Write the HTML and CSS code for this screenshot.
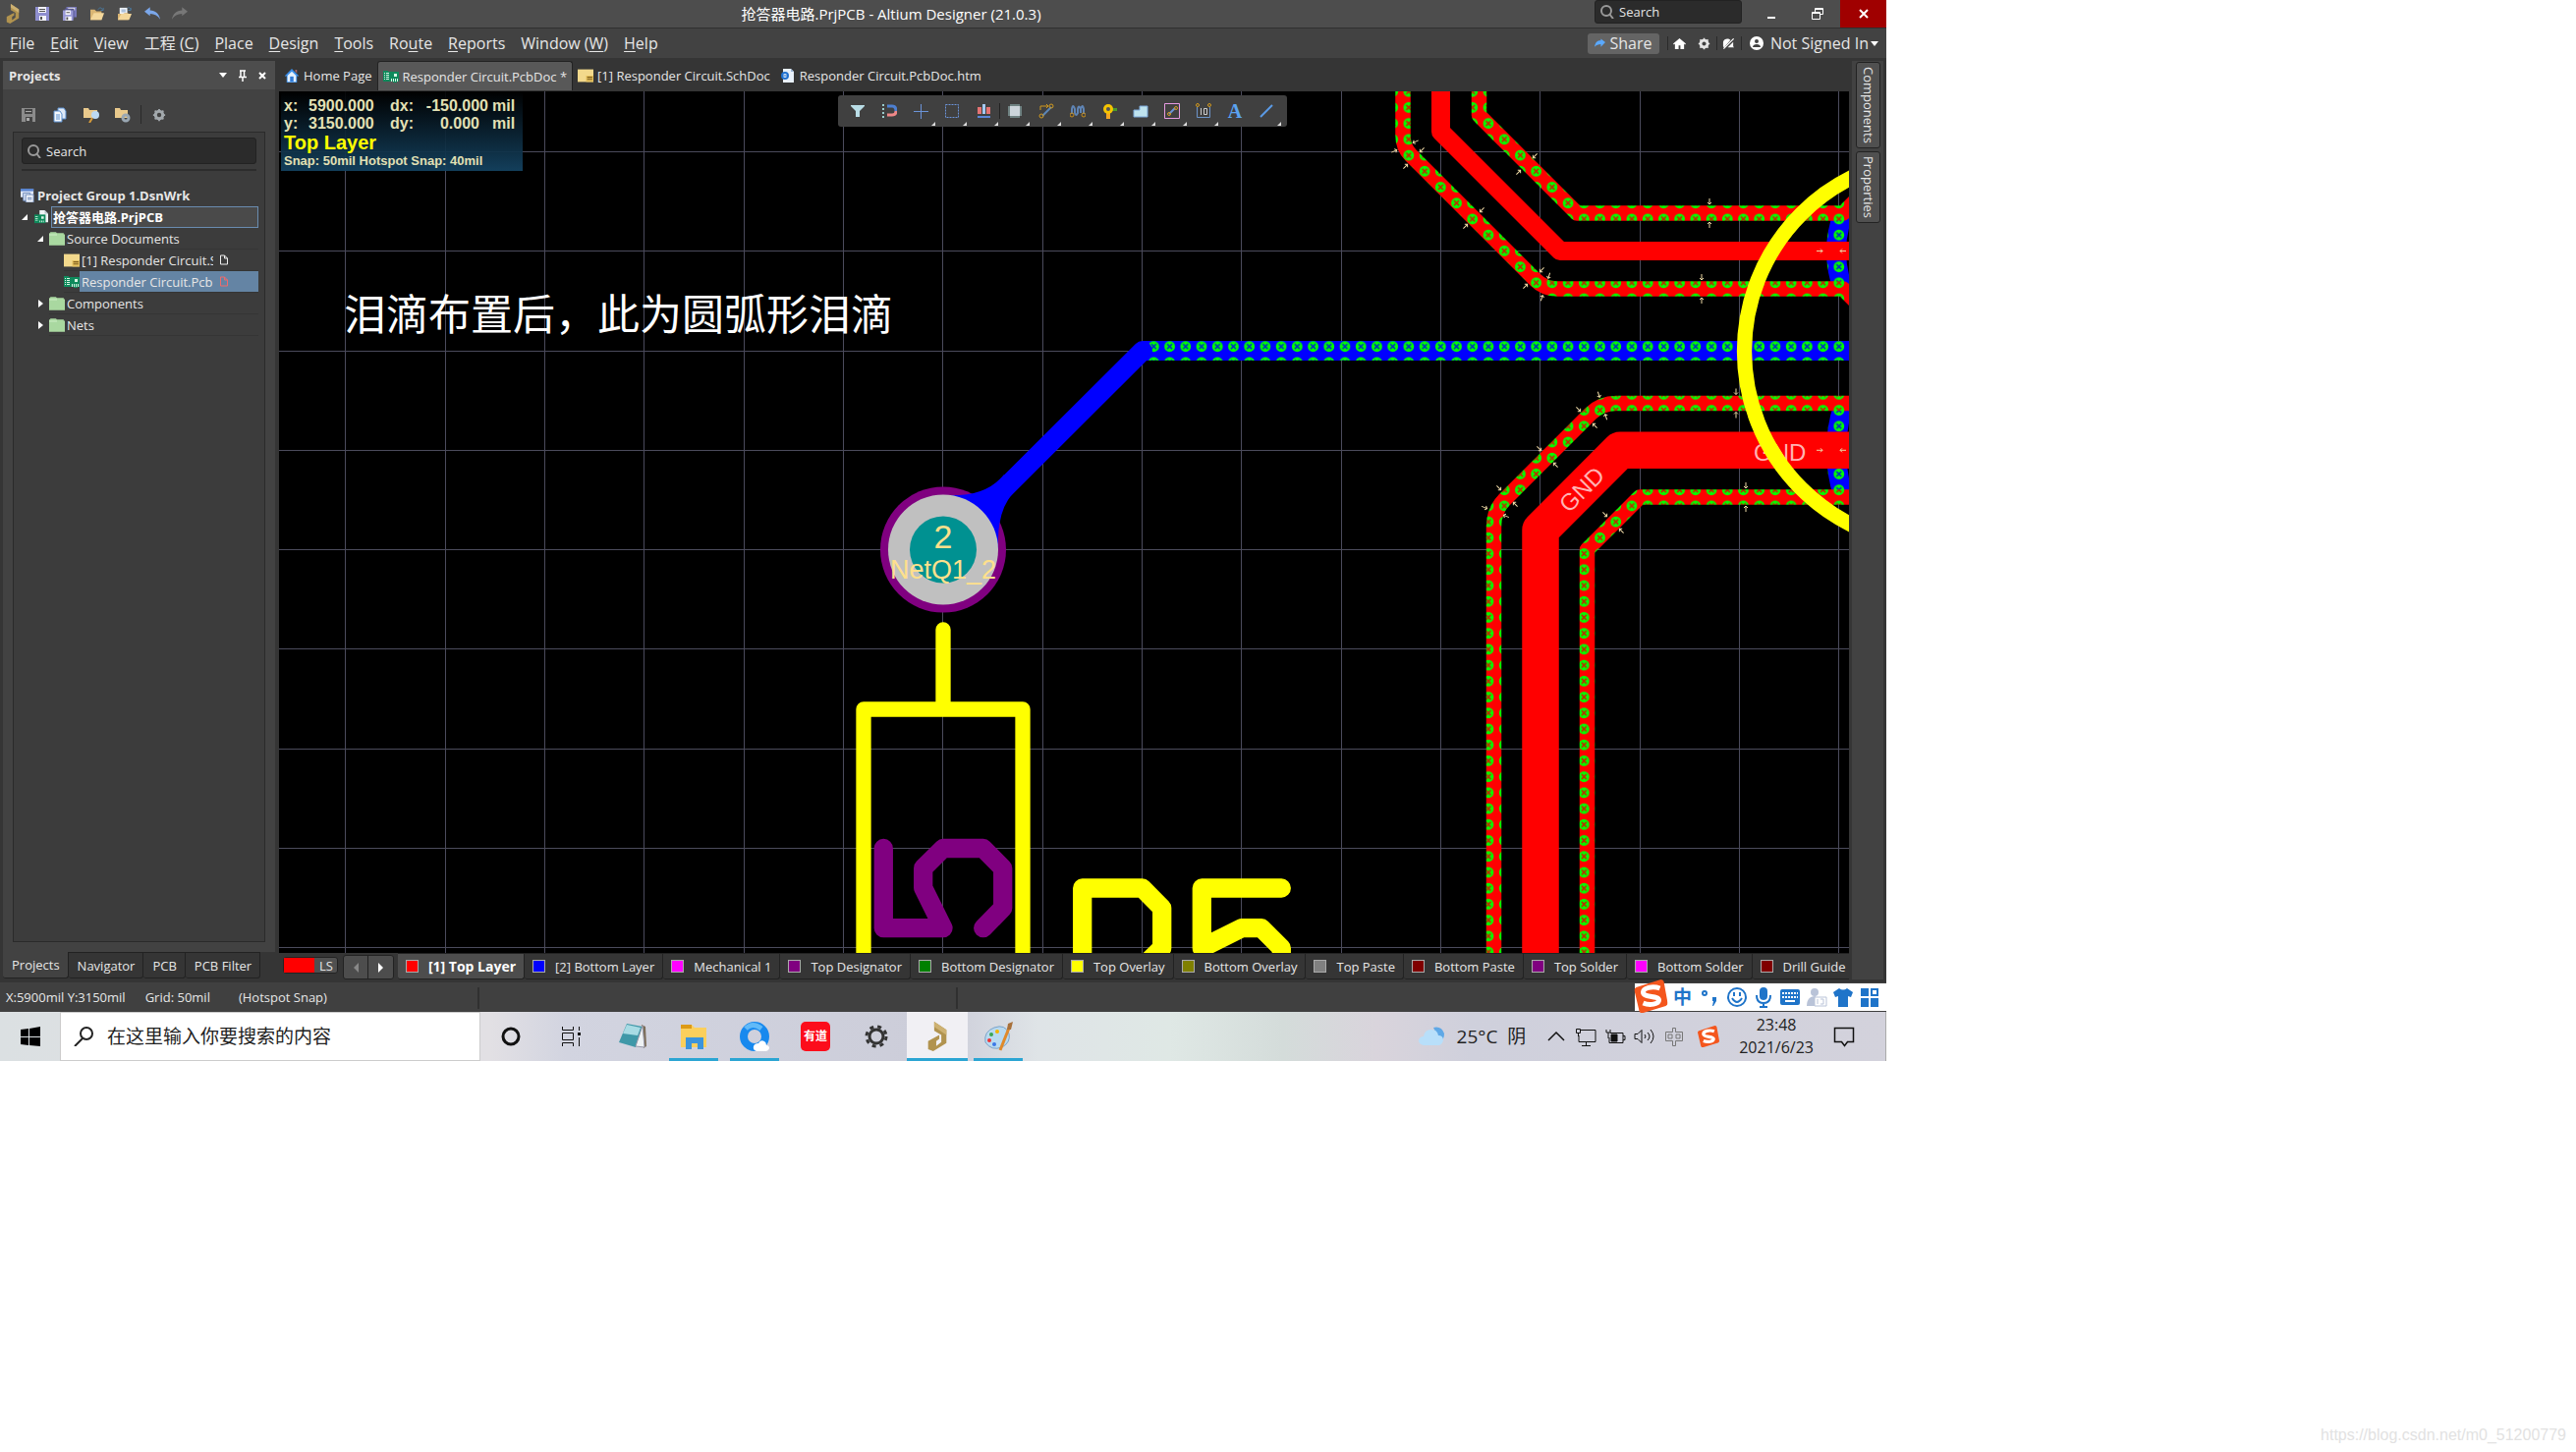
FILE: index.html
```html
<!DOCTYPE html>
<html lang="zh-CN">
  <head>
    <meta charset="UTF-8" />
    <meta name="viewport" content="width=device-width, initial-scale=1" />
    <title>抢答器电路.PrjPCB - Altium Designer (21.0.3)</title>
    <link rel="stylesheet" href="styles.css">
  </head>
  <body>
    <!-- shared icons -->
    <svg class="sprite" aria-hidden="true">
      <symbol id="i-altium" viewBox="0 0 18 29"><path d="M6 0v9l7 4v7l-5 4v-5l3-2v-4l-11 6v8l5 2 13-8V8z" fill="#b1934f"/><path d="M6 0l12 8v5L6 5z" fill="#cdb172"/></symbol>
      <symbol id="i-save" viewBox="0 0 14 14"><path d="M0 0h14v14H0z" fill="#8f8fd0"/><path d="M3 0h8v6H3zM4 9h7v5H4z" fill="#f4f4fa"/><path d="M4 2h6v1H4zM4 4h6v1H4zM5 10h2v3H5z" fill="#555"/></symbol>
      <symbol id="i-savegray" viewBox="0 0 14 14"><path d="M0 0h14v14H0z" fill="#8b8b8b"/><path d="M3 1h8v5H3zM4 9h7v5H4z" fill="#444"/><path d="M4 3h6v1H4zM5 10h3v3H5z" fill="#aaa"/></symbol>
      <symbol id="i-saveall" viewBox="0 0 16 16"><path d="M4 0h12v12H4z" fill="#7777b8"/><path d="M6 1h8v3H6z" fill="#eee"/><path d="M2 2h11v12H2z" fill="#55558c"/><path d="M0 4h12v12H0z" fill="#9a9ad6"/><path d="M3 4h6v5H3zM3 11h7v5H3z" fill="#f4f4fa"/><path d="M4 12h2v3H4zM4 6h4v1H4z" fill="#555"/></symbol>
      <symbol id="i-open" viewBox="0 0 16 16"><path d="M0 3h5l2 2h6v10H0z" fill="#d9b573"/><path d="M4 7h12l-3 8H0z" fill="#f3d79b"/><path d="M9 3c2-3 4-2 5 0M15 1v3h-3" fill="none" stroke="#4a7fa8"/></symbol>
      <symbol id="i-opendoc" viewBox="0 0 16 16"><path d="M2 1h9v9H2z" fill="#eef2f7"/><path d="M4 3h5v1H4zM4 5h5v1H4z" fill="#6b8fc0"/><path d="M0 8h6l2-1h4v8H0z" fill="#d9b573"/><path d="M4 8h12l-3 7H0z" fill="#f3d79b"/><path d="M11 2c2-2 3-1 4 1M15 1v3h-3" fill="none" stroke="#4a7fa8"/></symbol>
      <symbol id="i-undo" viewBox="0 0 14 12"><path d="M0 4l5-4v3c5 0 8 3 9 8-2-3-5-5-9-5v2z" fill="#7ba7ea"/></symbol>
      <symbol id="i-redo" viewBox="0 0 14 12"><path d="M14 4L9 0v3C4 3 1 6 0 11c2-3 5-5 9-5v2z" fill="#777"/></symbol>
      <symbol id="i-search" viewBox="0 0 14 14"><circle cx="6" cy="6" r="5" fill="none" stroke="#999" stroke-width="2"/><path d="M9 9l4 5" stroke="#999" stroke-width="2"/></symbol>
      <symbol id="i-pcb" viewBox="0 0 16 12"><path d="M0 0h5v1h11v10h-2v1h-4v-1H0z" fill="#0f8a5c"/><path d="M1 2h1v1H1zM3 2h3v1H3zM1 4h1v1H1zM3 4h3v1H3zM1 6h1v1H1zM3 6h3v1H3zM1 8h1v1H1zM3 8h3v1H3zM11 3h3v3h-3zM8 8h1v3H8zM10 8h1v3h-1zM12 8h1v3h-1zM14 8h1v3h-1z" fill="#d7f5e5"/></symbol>
      <symbol id="i-sch" viewBox="0 0 15 12"><path d="M0 0h15v12H0z" fill="#f3d98c"/><path d="M8 6h7v6H8z" fill="#e6c25f"/><path d="M9 7h5v1H9zM9 9h5v1H9z" fill="#7d5c1d"/></symbol>
      <symbol id="i-prj" viewBox="0 0 16 16"><path d="M6 0h6l4 4v10H6z" fill="#eef3f5"/><path d="M12 0l4 4h-4z" fill="#b8c4cc"/><path d="M0 5h13v10H0z" fill="#0f8a5c"/><path d="M1 7h3v1H1zM1 9h3v1H1zM1 11h3v1H1zM8 7h3v3H8zM6 12h1v2H6zM8 12h1v2H8zM10 12h1v2h-1z" fill="#d7f5e5"/></symbol>
      <symbol id="i-group" viewBox="0 0 16 16"><path d="M0 0h15v10H0z" fill="#dfe8f8"/><path d="M0 0h15v3H0z" fill="#5b86d0"/><path d="M3 5h8v9H3z" fill="#cfdcf2" stroke="#6b87b5"/><path d="M6 7h9v9H6z" fill="#f2f6fc" stroke="#6b87b5"/><path d="M8 10h5v1H8zM8 12h5v1H8z" fill="#6b87b5"/></symbol>
      <symbol id="i-folder" viewBox="0 0 14 12"><path d="M0 2V1h1V0h5l1 1h6v1h1v10H0z" fill="#a9d8a0"/><path d="M0 2h7v1H0z" fill="#c9ecc2"/></symbol>
      <symbol id="i-home" viewBox="0 0 16 16"><path d="M8 0l8 8-1 1-1-1v8H2V8L1 9 0 8l3-3 1-1z" fill="#3a8ee8"/><path d="M12 1h2v4l-2-2z" fill="#a66"/><path d="M8 3l5 5v7H3V8z" fill="#e4f0fc"/><path d="M6 9h4v6H6z" fill="#2f7ad6"/></symbol>
      <symbol id="i-gear" viewBox="0 0 16 16"><circle cx="8" cy="8" r="4" fill="none" stroke="currentColor" stroke-width="4"/><path d="M8 1v14M1 8h14M3 3l10 10M13 3L3 13" stroke="currentColor" stroke-width="2"/><circle cx="8" cy="8" r="2.500" fill="var(--hole)"/></symbol>
      <symbol id="i-htm" viewBox="0 0 14 14"><path d="M2 0h8l3 3v11H2z" fill="#e8f0fa"/><path d="M10 0l3 3h-3z" fill="#9ab4d8"/><circle cx="4" cy="7" r="3" fill="none" stroke="#1d6fd0" stroke-width="2"/><path d="M2 7h5" stroke="#1d6fd0"/></symbol>
      <symbol id="i-sogou" viewBox="0 0 34 34"><path d="M2 8l25-8q2 0 3 2l4 22q0 2-2 3L9 34q-3 1-4-2L0 11q0-2 2-3z" fill="#f4561d"/><path d="M26 9C18 6 9 9 9 13c0 6 16 3 16 8 0 4-9 6-16 3" fill="none" stroke="#fff" stroke-width="5"/></symbol>
    </svg>

    <div class="screen">
      <header class="titlebar">
        <div class="quick">
          <svg class="logo"><use href="#i-altium"/></svg>
          <button aria-label="Save"><svg><use href="#i-save"/></svg></button>
          <button aria-label="Save all"><svg><use href="#i-saveall"/></svg></button>
          <button aria-label="Open"><svg><use href="#i-open"/></svg></button>
          <button aria-label="Open project"><svg><use href="#i-opendoc"/></svg></button>
          <button aria-label="Undo"><svg><use href="#i-undo"/></svg></button>
          <button aria-label="Redo"><svg><use href="#i-redo"/></svg></button>
        </div>
        <h1>抢答器电路.PrjPCB - Altium Designer (21.0.3)</h1>
        <label class="search top-search"><svg><use href="#i-search"/></svg><input type="text" placeholder="Search" aria-label="Search"></label>
        <div class="win">
          <button aria-label="Minimize"><svg viewBox="0 0 12 12"><path d="M2 9h8v2H2z" fill="#fff"/></svg></button>
          <button aria-label="Restore"><svg viewBox="0 0 12 12" fill="none" stroke="#fff"><path d="M3.500 4V.5h8v6H9M3.500 1.500h8M.5 4.500H8.500v7H.5zM.5 5.500h8"/></svg></button>
          <button class="close" aria-label="Close"><svg viewBox="0 0 12 12"><path d="M2 2l8 8M10 2l-8 8" stroke="#fff" stroke-width="2"/></svg></button>
        </div>
      </header>

      <nav class="menubar">
        <button><u>F</u>ile</button>
        <button><u>E</u>dit</button>
        <button><u>V</u>iew</button>
        <button>工程 (<u>C</u>)</button>
        <button><u>P</u>lace</button>
        <button><u>D</u>esign</button>
        <button><u>T</u>ools</button>
        <button>Ro<u>u</u>te</button>
        <button><u>R</u>eports</button>
        <button>Window (<u>W</u>)</button>
        <button><u>H</u>elp</button>
        <div class="account">
          <button class="share"><svg viewBox="0 0 12 10"><path d="M12 4L7 0v2C3 2 1 4 0 9c2-2 4-3 7-3v3z" fill="#5aa9ff"/></svg>Share</button>
          <button class="ic bar" aria-label="Home"><svg viewBox="0 0 14 14"><path d="M7 1l7 6-1 1-1-1v6H8V9H6v4H2V7L1 8 0 7z" fill="#fff"/></svg></button>
          <button class="ic" aria-label="Settings"><svg viewBox="0 0 16 16"><use href="#i-gear"/></svg></button>
          <button class="ic bar" aria-label="Notifications"><svg viewBox="0 0 14 14"><path d="M1 10V5c1-4 6-4 8-2L2 11zM12 1l1 1L2 13l-1-1zM6 11l6-6v5l1 1z" fill="#fff"/></svg></button>
          <button class="user bar"><svg viewBox="0 0 14 14"><circle cx="7" cy="7" r="7" fill="#fff"/><circle cx="7" cy="5" r="2" fill="#424242"/><path d="M3 11c0-4 8-4 8 0z" fill="#424242"/></svg>Not Signed In<i class="caret"></i></button>
        </div>
      </nav>

      <div class="workspace">
        <aside class="panel">
          <div class="panel-head">
            <h2>Projects</h2>
            <i class="caret"></i>
            <svg viewBox="0 0 8 12"><path d="M1 1h6M2 1v6M5.500 1v6M0 7.500h8M4 7v5" stroke="#fff" stroke-width="1.500"/></svg>
            <svg viewBox="0 0 8 12"><path d="M1 3l6 6M7 3L1 9" stroke="#fff" stroke-width="2"/></svg>
          </div>
          <div class="panel-tools">
            <button aria-label="Save"><svg class="small"><use href="#i-savegray"/></svg></button>
            <button aria-label="Compile"><svg viewBox="0 0 14 16"><path d="M5 1h6l2 3v8H5z" fill="#dfeaf8" stroke="#5b8fcf"/><path d="M1 4h6l2 3v8H1z" fill="#f4f8fd" stroke="#5b8fcf"/><path d="M3 8h4M3 10h4M3 12h4" stroke="#5b8fcf"/></svg></button>
            <button aria-label="Explore"><svg viewBox="0 0 16 16"><path d="M0 1h5l1 2h8v8H0z" fill="#e9c98c"/><circle cx="12" cy="8" r="4" fill="#bcd9f2"/><path d="M9 11l-3 5" stroke="#d79b3a" stroke-width="2"/></svg></button>
            <button aria-label="Project options"><svg viewBox="0 0 16 16"><path d="M0 1h5l1 2h7v8H0z" fill="#e9c98c"/><circle cx="11" cy="11" r="3" fill="none" stroke="#9aa7b3" stroke-width="3"/></svg></button>
            <button class="bar" aria-label="Settings"><svg class="small"><use href="#i-gear"/></svg></button>
          </div>
          <div class="panel-body">
            <label class="search"><svg><use href="#i-search"/></svg><input type="text" placeholder="Search" aria-label="Search projects"></label>
            <ul class="tree">
              <li class="l0"><svg><use href="#i-group"/></svg><b>Project Group 1.DsnWrk</b></li>
              <li class="l1 open current"><svg><use href="#i-prj"/></svg><b>抢答器电路.PrjPCB</b></li>
              <li class="l2 open"><svg><use href="#i-folder"/></svg><span>Source Documents</span></li>
              <li class="l3"><svg><use href="#i-sch"/></svg><span class="name">[1] Responder Circuit.S</span><svg class="doc" viewBox="0 0 8 10"><path d="M.5.5h4l3 3v6h-7zM4.500.5v3h3" fill="none" stroke="#eee"/></svg></li>
              <li class="l3 selected"><svg><use href="#i-pcb"/></svg><span class="name">Responder Circuit.Pcb</span><svg class="doc" viewBox="0 0 8 10"><path d="M.5.5h4l3 3v6h-7zM4.500.5v3h3" fill="none" stroke="#f06a6a"/></svg></li>
              <li class="l2 shut"><svg><use href="#i-folder"/></svg><span>Components</span></li>
              <li class="l2 shut"><svg><use href="#i-folder"/></svg><span>Nets</span></li>
            </ul>
          </div>
          <div class="panel-tabs">
            <button class="on">Projects</button><button>Navigator</button><button>PCB</button><button>PCB Filter</button>
          </div>
        </aside>

        <main class="editor">
          <div class="doc-tabs">
            <button><svg><use href="#i-home"/></svg>Home Page</button>
            <button class="on"><svg><use href="#i-pcb"/></svg>Responder Circuit.PcbDoc *</button>
            <button><svg><use href="#i-sch"/></svg>[1] Responder Circuit.SchDoc</button>
            <button><svg><use href="#i-htm"/></svg>Responder Circuit.PcbDoc.htm</button>
          </div>

          <div class="canvas">
            <svg class="board" viewBox="284 93 1598 877" preserveAspectRatio="xMinYMin slice">
              <defs>
                <pattern id="viaRed" patternUnits="userSpaceOnUse" x="1863.700" y="344.600" width="16.220" height="16.220">
                  <path d="M0 0h17v17H0z" fill="#f00"/><circle cx="8.100" cy="8.100" r="5.400" fill="#0f0"/><path d="M5.600 5.600l5 5M10.600 5.600l-5 5" stroke="#c22800" stroke-width="1.500"/>
                </pattern>
                <pattern id="viaBlue" patternUnits="userSpaceOnUse" x="1863.700" y="344.600" width="16.220" height="16.220">
                  <path d="M0 0h17v17H0z" fill="#00f"/><circle cx="8.100" cy="8.100" r="5.400" fill="#0f0"/><path d="M5.600 5.600l5 5M10.600 5.600l-5 5" stroke="#0030c0" stroke-width="1.500"/>
                </pattern>
                <g id="arrows"><path d="M0-15v6M-2-11l2 2 2-2M0 15V9M-2 11l2-2 2 2"/></g>
              </defs>
              <path class="grid" d="M351.500 93v877M453.500 93v877M554.500 93v877M655.500 93v877M757.500 93v877M858.500 93v877M959.500 93v877M1061.500 93v877M1162.500 93v877M1263.500 93v877M1365.500 93v877M1466.500 93v877M1567.500 93v877M1669.500 93v877M1770.500 93v877M1871.500 93v877M284 154.500h1598M284 255.500h1598M284 357.500h1598M284 458.500h1598M284 559.500h1598M284 660.500h1598M284 762.500h1598M284 863.500h1598M284 964.500h1598"/>

              <!-- bottom layer -->
              <g fill="none" stroke="url(#viaBlue)" stroke-width="20">
                <path d="M1162 357H1882"/>
                <path d="M1876 218Q1862 256 1876 294M1876 414Q1862 458 1876 504"/>
              </g>

              <!-- top layer -->
              <g fill="none" stroke="url(#viaRed)" stroke-width="15.500" stroke-linejoin="round">
                <path d="M1428 93V138Q1428 150 1436 158L1563 285Q1572 294 1585 294H1876L1888 306"/>
                <path d="M1505.500 93V117.500L1605 217H1876L1888 205"/>
                <path d="M1520.500 970V536Q1520.500 520 1531 509L1619 421Q1630 410.500 1645 410.500H1882"/>
                <path d="M1615.500 970V559.500L1669 506H1882"/>
              </g>
              <g fill="none" stroke="#f00" stroke-linejoin="round">
                <path d="M1466.500 93V134L1588 255.500H1882" stroke-width="19"/>
                <path d="M1568 970V539.500L1649 458.300H1882" stroke-width="37.500"/>
              </g>
              <g class="net-label">
                <text x="1785" y="469">GND</text>
                <text transform="translate(1597 523) rotate(-45)">GND</text>
              </g>
              <g class="arrows">
                <use href="#arrows" transform="translate(1740 217)"/>
                <use href="#arrows" transform="translate(1732 294)"/>
                <use href="#arrows" transform="translate(1767 410.500)"/>
                <use href="#arrows" transform="translate(1777 506)"/>
                <use href="#arrows" transform="translate(1864 255.500) rotate(90)"/>
                <use href="#arrows" transform="translate(1864 458.300) rotate(90)"/>
                <use href="#arrows" transform="translate(1430 149) rotate(66)"/>
                <use href="#arrows" transform="translate(1439 161) rotate(45)"/>
                <use href="#arrows" transform="translate(1500 222) rotate(45)"/>
                <use href="#arrows" transform="translate(1554 167) rotate(45)"/>
                <use href="#arrows" transform="translate(1561 283) rotate(45)"/>
                <use href="#arrows" transform="translate(1573 292) rotate(18)"/>
                <use href="#arrows" transform="translate(1575 465) rotate(-45)"/>
                <use href="#arrows" transform="translate(1615 425) rotate(-45)"/>
                <use href="#arrows" transform="translate(1631 413) rotate(-18)"/>
                <use href="#arrows" transform="translate(1534 505) rotate(-45)"/>
                <use href="#arrows" transform="translate(1522 521) rotate(-68)"/>
                <use href="#arrows" transform="translate(1642 532) rotate(-45)"/>
              </g>

              <!-- pad with teardrop -->
              <circle cx="960" cy="559.500" r="64" fill="#800080"/>
              <path d="M1163 357L960 559.500" stroke="#00f" stroke-width="20" stroke-linecap="round"/>
              <path d="M960 504Q1003 507 1022 483L1032 501Q1014 520 1016 560L960 560z" fill="#00f"/>
              <circle cx="960" cy="559.500" r="56" fill="#c0c0c0"/>
              <circle cx="960" cy="559.500" r="34" fill="#009191"/>
              <g class="pad-label">
                <text class="pin" x="960" y="558">2</text>
                <text x="960" y="589">NetQ1_2</text>
              </g>

              <!-- overlay -->
              <g class="silk" stroke="#ff0" stroke-width="15.300">
                <circle cx="1973" cy="357.500" r="197.500"/>
                <path d="M960 641V722M879 980V722H1041V980"/>
              </g>
              <g class="silk" stroke-width="19.300">
                <path d="M1101.700 990V904H1162.700L1182.700 924.300V965L1160 987M1304.300 904H1223.300V965L1264 944.700H1284L1304.300 965V990" stroke="#ff0"/>
                <path d="M899.300 863.500V944.700H960L939.700 903.700V883.700L960 863.500H1000.700L1020.700 883.700V924.300L1000.700 944.700" stroke="#800080"/>
              </g>
              <text class="note" x="350" y="336">泪滴布置后，此为圆弧形泪滴</text>
            </svg>

            <div class="hud">
              <div class="hud-pos">
                <span>x:</span><span>5900.000</span><span>dx:</span><span class="num">-150.000</span><span>mil</span>
                <span>y:</span><span>3150.000</span><span>dy:</span><span class="num mid">0.000</span><span>mil</span>
              </div>
              <strong>Top Layer</strong>
              <small>Snap: 50mil Hotspot Snap: 40mil</small>
            </div>

            <div class="tools">
              <button aria-label="Filter"><svg viewBox="0 0 16 16"><path d="M1 2h14v1l-5 5v6H6V8L1 3z" fill="#b9dde6"/></svg></button>
              <button aria-label="Snap"><svg viewBox="0 0 16 16" fill="none"><path d="M6 3h5q4 0 4 5" stroke="#4d7fd0" stroke-width="3"/><path d="M15 8q0 4-4 4H6" stroke="#e88" stroke-width="3"/><path d="M2 1v14" stroke="#9cc" stroke-width="2" stroke-dasharray="2 2"/></svg></button>
              <button class="more" aria-label="Move"><svg viewBox="0 0 16 16" stroke="#6b93d8"><path d="M8.500 1v15M1 8.500h15"/></svg></button>
              <button class="more" aria-label="Select"><svg viewBox="0 0 16 16" fill="none" stroke="#6b93d8"><path d="M1.500 1.500h13v13h-13z" stroke-dasharray="2 1"/></svg></button>
              <button class="more" aria-label="Align"><svg viewBox="0 0 16 16"><path d="M2 4h4v7H2zM11 4h4v7h-4z" fill="#e57373"/><path d="M7 1h3v10H7z" fill="#a5c8f0"/><path d="M2 13h13v2H2z" fill="#5b86d8"/></svg></button>
              <button class="more bar" aria-label="Component"><svg viewBox="0 0 16 16"><path d="M1 4h14M1 6h14M1 8h14M1 10h14M1 12h14M4 1v14M6 1v14M8 1v14M10 1v14M12 1v14" stroke="#9fc5c5"/><path d="M3 3h10v10H3z" fill="#ccd5db"/></svg></button>
              <button class="more" aria-label="Route"><svg viewBox="0 0 16 16" fill="none" stroke="#d29a1e"><path d="M2 7V3h8M8 1l2 2-2 2"/><path d="M4 13L13 4" stroke="#5b86b8" stroke-width="2"/><circle cx="3" cy="13" r="2"/><circle cx="13" cy="3" r="2"/></svg></button>
              <button class="more" aria-label="Tune"><svg viewBox="0 0 16 16" fill="none" stroke="#5f84b4" stroke-width="2"><path d="M2 11V6q1-6 3 0v4q1 4 3 0V6q1-5 3 0v4"/><path d="M11 6q2-6 3 0v5"/><g stroke="#c78d1b" stroke-width="1"><circle cx="2" cy="12" r="2"/><circle cx="14" cy="12" r="2"/></g></svg></button>
              <button class="more" aria-label="Via"><svg viewBox="0 0 16 16"><path d="M5 8h4v8H5z" fill="#f5a623"/><path d="M9 5h7v3H9z" fill="#4c9a2a"/><circle cx="7" cy="6" r="5" fill="#f5c400"/><circle cx="7" cy="6" r="2" fill="#555"/></svg></button>
              <button class="more" aria-label="Polygon"><svg viewBox="0 0 16 16"><path d="M1 14V7h6V3h8v11z" fill="#bfe3ee" stroke="#7ba7d8"/></svg></button>
              <button class="more" aria-label="Keepout"><svg viewBox="0 0 16 16" fill="none"><path d="M.5.5h15v15H.5z" stroke="#e59ae0"/><path d="M5 11l6-6" stroke="#6b93d8" stroke-width="2"/><circle cx="5" cy="11" r="1.500" stroke="#d29a1e"/><circle cx="12" cy="5" r="1.500" stroke="#d29a1e"/></svg></button>
              <button class="more" aria-label="Dimension"><svg viewBox="0 0 16 16" fill="none" stroke="#6b93c8"><path d="M1.500 4v10.500h13V4"/><path d="M5.500 5v7M8.500 5.500h3v6h-3z" stroke="#ccc"/><g stroke="#d29a1e"><circle cx="2" cy="2" r="1.500"/><circle cx="14" cy="2" r="1.500"/></g></svg></button>
              <button class="letter" aria-label="Text">A</button>
              <button class="more" aria-label="Line"><svg viewBox="0 0 16 16"><path d="M2 14L14 2" stroke="#5a9ae6" stroke-width="2"/></svg></button>
            </div>
          </div>

          <div class="layers">
            <button class="ls"><i></i>LS</button>
            <div class="nav"><button aria-label="Previous"><i class="left"></i></button><button aria-label="Next"><i class="right"></i></button></div>
            <div class="layer-tabs">
              <button class="on"><i class="c-red"></i>[1] Top Layer</button>
              <button><i class="c-blue"></i>[2] Bottom Layer</button>
              <button><i class="c-magenta"></i>Mechanical 1</button>
              <button><i class="c-purple"></i>Top Designator</button>
              <button><i class="c-green"></i>Bottom Designator</button>
              <button><i class="c-yellow"></i>Top Overlay</button>
              <button><i class="c-olive"></i>Bottom Overlay</button>
              <button><i class="c-gray"></i>Top Paste</button>
              <button><i class="c-maroon"></i>Bottom Paste</button>
              <button><i class="c-purple"></i>Top Solder</button>
              <button><i class="c-magenta"></i>Bottom Solder</button>
              <button><i class="c-maroon"></i>Drill Guide</button>
            </div>
          </div>
        </main>

        <div class="side-tabs">
          <button>Components</button>
          <button>Properties</button>
        </div>
      </div>

      <footer class="status">
        <span>X:5900mil Y:3150mil</span><span>Grid: 50mil</span><span>(Hotspot Snap)</span>
        <div class="ime">
          <svg class="s" viewBox="0 0 34 34"><use href="#i-sogou"/></svg>
          <b>中</b>
          <svg viewBox="0 0 22 22"><circle cx="5" cy="7" r="2" fill="none" stroke="#1f74c9" stroke-width="2"/><path d="M13 11h4v4l-3 5h-1l1-5h-1z" fill="#1f74c9"/></svg>
          <svg viewBox="0 0 22 22" fill="none" stroke="#1f74c9" stroke-width="2"><circle cx="11" cy="11" r="9"/><path d="M8 6v4M14 6v4M6 12q5 8 10 0"/></svg>
          <svg viewBox="0 0 22 22"><rect x="7" y="1" width="8" height="13" rx="4" fill="#1f74c9"/><path d="M4 9q0 8 7 8t7-8M11 17v4M7 21h8" fill="none" stroke="#1f74c9" stroke-width="2"/></svg>
          <svg viewBox="0 0 22 22"><rect x="1" y="3" width="20" height="16" rx="2" fill="#1f74c9"/><path d="M3 7h16M3 11h16" stroke="#fff" stroke-width="2" stroke-dasharray="2 1"/><path d="M6 15h10" stroke="#fff" stroke-width="2"/></svg>
          <svg viewBox="0 0 22 22"><circle cx="9" cy="6" r="4" fill="#b9c3d8"/><path d="M1 20q0-10 9-10v10z" fill="#b9c3d8"/><path d="M9 11h12v9H9z" fill="#fff" stroke="#b9c3d8"/><path d="M12 13v5M15 13h3v5h-3" stroke="#b9c3d8" fill="none"/></svg>
          <svg viewBox="0 0 22 22"><path d="M7 2q4 3 8 0l6 4-2 5-3-1v11H6V10l-3 1-2-5z" fill="#1f74c9"/></svg>
          <svg viewBox="0 0 22 22" fill="#1f74c9"><path d="M2 2h8v8H2zM2 12h8v9H2zM12 12h8v9h-8z"/><path d="M13 3h6v6h-6z" fill="none" stroke="#1f74c9" stroke-width="2"/></svg>
        </div>
      </footer>

      <div class="taskbar">
        <button class="start" aria-label="Start"><svg viewBox="0 0 20 20"><path d="M0 3l8-1v8H0zM9 2l11-2v10H9zM0 11h8v8l-8-1zM9 11h11v9L9 19z"/></svg></button>
        <label class="task-search"><svg viewBox="0 0 20 20"><circle cx="13" cy="7" r="6" fill="none" stroke="#222" stroke-width="2"/><path d="M9 12l-8 8" stroke="#222" stroke-width="2"/></svg><input type="text" placeholder="在这里输入你要搜索的内容" aria-label="搜索"></label>
        <div class="apps">
          <button aria-label="Cortana"><svg viewBox="0 0 30 30"><circle cx="15" cy="15" r="8" fill="none" stroke="#111" stroke-width="3"/></svg></button>
          <button aria-label="Task view"><svg viewBox="0 0 30 30" fill="none" stroke="#111"><path d="M5.500 5v3.500h11V5M5.500 11.500h11v7h-11zM5.500 25v-3.500h11V25M22.500 5v4M22.500 16v9"/><path d="M21 11h3v3h-3z" fill="#111" stroke="none"/></svg></button>
          <button aria-label="Notepad"><svg viewBox="0 0 30 30"><path d="M24 3l4 2 1 20-3 2z" fill="#7c6d58"/><path d="M9 2l16 3-7 21-17-5z" fill="#3f98a8"/><path d="M9 3l14 3-3 8-15-2z" fill="#a8dbe4"/><path d="M25 4l2 22-9-1z" fill="#eef2f4" stroke="#99a"/></svg></button>
          <button class="run" aria-label="Explorer"><svg viewBox="0 0 30 30"><path d="M2 3h11l3 3h12v20H2z" fill="#fbcf5c"/><path d="M2 3h11v4H2z" fill="#dd9a16"/><path d="M7 16h18v12h-6v-6h-6v6H7z" fill="#3b94dc"/></svg></button>
          <button class="run" aria-label="Browser"><svg viewBox="0 0 30 30"><circle cx="15" cy="15" r="11" fill="none" stroke="#1889ee" stroke-width="8"/><path d="M6 7q7-7 16 0" fill="none" stroke="#61baf8" stroke-width="5"/><path d="M17 30q-4-1-3-5 1-3 5-3 2-4 6-2 2 1 2 4 3 0 3 3-1 3-4 3z" fill="#fff"/></svg></button>
          <button aria-label="有道"><span class="youdao">有道</span></button>
          <button class="cog" aria-label="Settings"><svg viewBox="0 0 30 30"><circle cx="15" cy="15" r="7" fill="none" stroke="#333" stroke-width="3"/><circle cx="15" cy="15" r="10" fill="none" stroke="#333" stroke-width="3" stroke-dasharray="4 4"/></svg></button>
          <button class="run front" aria-label="Altium Designer"><svg><use href="#i-altium"/></svg></button>
          <button class="run" aria-label="Paint"><svg viewBox="0 0 30 30"><path d="M2 21Q0 10 11 6q11-4 15 6 2 9-7 14Q8 30 2 21z" fill="#b9daf0" stroke="#7ba3c8"/><circle cx="8" cy="13" r="2" fill="#3aa655"/><circle cx="14" cy="10" r="2" fill="#f4b400"/><circle cx="6" cy="19" r="2" fill="#e33"/><circle cx="11" cy="23" r="2" fill="#3b78e7"/><path d="M27 4L17 29" stroke="#e08a2a" stroke-width="3"/><path d="M24 8l1-6 5-2-2 8z" fill="#a8713b"/></svg></button>
        </div>
        <div class="tray">
          <svg class="weather" viewBox="0 0 26 20"><path d="M15 1q8-2 11 6 0 6-4 8z" fill="#5fa8e6"/><path d="M5 19q-5-1-5-5 1-4 5-4 1-7 8-7 6 0 7 6 5 0 5 5-1 4-4 5z" fill="#b8dffa"/></svg>
          <span class="temp">25°C&nbsp; 阴</span>
          <svg viewBox="0 0 22 22" fill="none" stroke="#111"><path d="M3 15l8-8 8 8" stroke-width="1.500"/></svg>
          <svg viewBox="0 0 22 22" fill="none" stroke="#111"><path d="M6 4.500h15v12H4V10M11.500 17v3M7 20.500h9M1.500 3.500h4v4h-4zM3.500 8v3"/></svg>
          <svg viewBox="0 0 22 22" fill="none" stroke="#111"><path d="M6 7.500h13v10H5V12M19 10.500h2v4h-2M2 4v3h4V4M4 7v6"/><path d="M7 9h6v7H7z" fill="#111"/></svg>
          <svg viewBox="0 0 22 22" fill="none" stroke="#111"><path d="M1 8.500h3l4-4v13l-4-4H1zM11 9q2 2 0 4M14 7q4 4 0 8M17 4q6 7 0 14"/></svg>
          <svg viewBox="0 0 22 22" fill="none" stroke="#777"><path d="M2.500 6.500h7v-4h3v4h7v9h-7v5h-3v-5h-7zM5 9h4v4H5zM13 9h4v4h-4z"/></svg>
          <svg class="s" viewBox="0 0 34 34"><use href="#i-sogou"/></svg>
          <time>23:48<br>2021/6/23</time>
          <svg class="msg" viewBox="0 0 22 22" fill="none" stroke="#111"><path d="M1.500 2.500h19v14h-6l-3 4-3-4h-7z" stroke-width="1.500"/></svg>
        </div>
      </div>
    </div>
    <p class="watermark">https://blog.csdn.net/m0_51200779</p>
  </body>
</html>
```

FILE: styles.css
```css
* {
  box-sizing: border-box;
}
body {
  margin: 0;
  min-height: 100vh;
  display: flex;
  flex-direction: column;
  background: #fff;
  color: #e6e6e6;
  font: 13px/20px "Open Sans", "Noto Sans CJK SC", sans-serif;
}
button {
  display: flex;
  align-items: center;
  justify-content: center;
  padding: 0;
  border: 0;
  background: none;
  color: inherit;
  font: inherit;
  white-space: nowrap;
}
svg {
  display: block;
  flex: none;
  width: 16px;
  height: 16px;
}
input {
  min-width: 0;
  flex: 1;
  border: 0;
  padding: 0;
  background: none;
  color: inherit;
  font: inherit;
  outline: none;
}
input::placeholder {
  color: inherit;
  opacity: 1;
}
h1, h2, p, ul {
  margin: 0;
  padding: 0;
  list-style: none;
}
.sprite {
  position: absolute;
  width: 0;
  height: 0;
}
.screen {
  --hole: #424242;
  width: 100%;
  max-width: 1920px;
  background: #353535;
}
.caret {
  border: 4px solid transparent;
  border-top: 5px solid #fff;
  border-bottom: 0;
}

/* title bar */
.titlebar {
  display: flex;
  height: 29px;
  background: #4d4d4d;
  border-bottom: 1px solid #303030;
}
.quick {
  display: flex;
  align-items: center;
  padding-left: 5px;
  gap: 12px;
}
.quick .logo {
  height: 20px;
  margin-right: 2px;
}
.quick button svg {
  height: 14px;
}
.titlebar h1 {
  flex: 1;
  text-align: center;
  font-size: 15px;
  font-weight: 400;
  line-height: 28px;
  color: #fff;
}
.search {
  display: flex;
  align-items: center;
  gap: 5px;
  height: 27px;
  padding: 0 5px;
  background: #2b2b2b;
  border: 1px solid #222;
  border-radius: 3px;
}
.search svg {
  width: 14px;
  height: 14px;
}
.top-search {
  width: 150px;
  height: 24px;
}
.win {
  display: flex;
  padding-left: 6px;
}
.win button {
  width: 47px;
}
.win svg {
  width: 12px;
  height: 12px;
}
.win .close {
  background: #a00000;
}

/* menu */
.menubar {
  display: flex;
  align-items: center;
  gap: 16px;
  height: 30px;
  padding-left: 10px;
  background: #424242;
  font-size: 16px;
}
.menubar u {
  text-underline-offset: 2px;
}
.account {
  display: flex;
  align-items: center;
  margin-left: auto;
  padding-right: 8px;
}
.share {
  gap: 4px;
  width: 73px;
  height: 21px;
  margin-right: 8px;
  background: #646464;
  border-radius: 3px;
}
.share svg {
  width: 11px;
  height: 10px;
}
.account .ic {
  width: 25px;
}
.account .ic svg {
  width: 13px;
  height: 13px;
}
.user svg {
  width: 14px;
  height: 14px;
}
.bar {
  border-left: 1px solid #2a2a2a;
}
.account .bar {
  height: 14px;
}
.user {
  gap: 7px;
  padding-left: 8px;
}
.user .caret {
  margin-left: -5px;
}

/* projects panel */
.workspace {
  display: flex;
  height: 941px;
}
.panel {
  display: flex;
  flex-direction: column;
  width: 277px;
  margin: 3px 4px 4px 3px;
  background: #424242;
}
.panel-head {
  display: flex;
  align-items: center;
  gap: 12px;
  height: 29px;
  padding: 0 9px 0 6px;
  background: #4d4d4d;
}
.panel-head h2 {
  flex: 1;
  font-size: 13px;
}
.panel-head svg {
  width: 8px;
  height: 12px;
}
.panel-tools {
  display: flex;
  height: 43px;
  padding: 16px 0 8px 10px;
}
.panel-tools button {
  width: 32px;
  color: #a3a9ad;
}
.panel-tools .small {
  width: 14px;
  height: 14px;
}
.panel-tools .bar {
  width: 36px;
  margin-left: 2px;
}
.panel-body {
  flex: 1;
  margin: 0 10px;
  padding: 5px 8px;
  border: 1px solid #2a2a2a;
  background: #3c3c3c;
}
.tree {
  margin-top: 5px;
  padding-top: 14px;
  border-top: 2px solid #2c2c2c;
}
.tree li {
  position: relative;
  display: flex;
  align-items: center;
  height: 22px;
  gap: 2px;
  margin-right: -2px;
}
.tree li > svg:first-child {
  height: 14px;
}
.tree .l0 { margin-left: -2px; }
.tree .l1 { margin-left: 12px; }
.tree .l2 { margin-left: 28px; }
.tree .l3 { margin-left: 43px; }
.tree .l1 b {
  flex: 1;
  padding-left: 1px;
  background: #4a4a4a;
  border: 1px solid #6a8cb0;
  color: #fff;
}
.tree .l2,
.tree .l3 {
  border-bottom: 1px solid #353535;
}
.tree .open::before,
.tree .shut::before {
  content: "";
  position: absolute;
  left: -12px;
  border: 3px solid transparent;
  border-right-color: #fff;
  border-bottom-color: #fff;
}
.tree .shut::before {
  left: -11px;
  border: 4px solid transparent;
  border-left: 5px solid #fff;
  border-right: 0;
}
.tree .name {
  width: 134px;
  overflow: hidden;
  white-space: nowrap;
}
.tree .selected {
  background: linear-gradient(90deg, transparent 16px, #6484a4 16px);
}
.tree .doc {
  width: 8px;
  height: 11px;
  margin-left: 5px;
}
.panel-tabs {
  display: flex;
  padding-top: 10px;
  background: linear-gradient(#424242 10px, #353535 10px);
}
.panel-tabs button {
  height: 27px;
  padding: 0 8px 0 9px;
  border: 1px solid #222;
  border-left-width: 0;
  border-radius: 0 0 3px 3px;
}
.panel-tabs .on {
  background: #424242;
  border-top: 0;
}

/* editor */
.editor {
  flex: 1;
  min-width: 0;
  display: flex;
  flex-direction: column;
}
.doc-tabs {
  display: flex;
  height: 34px;
  padding: 3px 0 1px;
}
.doc-tabs button {
  gap: 4px;
  padding: 0 5px;
}
.doc-tabs svg {
  height: 14px;
}
.doc-tabs .on {
  background: #585858;
  border: 1px solid #222;
  border-bottom: 0;
  border-radius: 3px 3px 0 0;
}
.canvas {
  position: relative;
  flex: 1;
  min-height: 0;
  overflow: hidden;
  background: #000;
}
.board {
  width: 100%;
  height: 100%;
}
.grid {
  stroke: #4b4b5c;
}
.silk {
  fill: none;
  stroke-linecap: round;
  stroke-linejoin: round;
}
.arrows {
  fill: none;
  stroke: #eed9a6;
}
.net-label,
.pad-label {
  font: 27px "Liberation Sans", sans-serif;
  fill: #ffe08c;
}
.net-label {
  font-size: 24px;
  fill: #ffb3b3;
}
.pad-label {
  text-anchor: middle;
}
.pad-label .pin {
  font-size: 34px;
}
.note {
  font: 43px "Noto Sans CJK SC", sans-serif;
  fill: #fff;
}
.hud {
  position: absolute;
  top: 0;
  left: 2px;
  width: 246px;
  height: 81px;
  padding: 6px 3px;
  background: linear-gradient(rgba(0, 0, 0, 0.9), rgba(20, 66, 96, 0.95));
  color: #e3e0b4;
  font-family: "Liberation Sans", sans-serif;
  font-weight: 700;
}
.hud-pos {
  display: grid;
  grid-template-columns: 25px 83px 32px 72px auto;
  font-size: 16px;
  line-height: 18px;
}
.hud .num {
  padding-right: 4px;
  text-align: right;
}
.hud .mid {
  padding-right: 13px;
}
.hud strong {
  display: block;
  font-size: 20px;
  line-height: 21px;
  color: #ff0;
}
.hud small {
  display: block;
  font-size: 13px;
  line-height: 15px;
}
.tools {
  position: absolute;
  top: 4px;
  left: 569px;
  display: flex;
  height: 32px;
  padding: 0 5px 0 4px;
  background: #404040;
  border-radius: 3px;
}
.tools button {
  position: relative;
  width: 32px;
}
.tools .more::after {
  content: "";
  position: absolute;
  right: 1px;
  bottom: 1px;
  border: 2px solid transparent;
  border-right-color: #ddd;
  border-bottom-color: #ddd;
}
.tools .bar {
  border: 0;
  background: linear-gradient(#222, #222) 0 8px / 1px 16px no-repeat;
}
.tools .letter {
  color: #5ba3f0;
  font: bold 20px "Liberation Serif", serif;
}

/* layer tabs */
.layers {
  display: flex;
  height: 30px;
  padding: 0 0 3px 4px;
}
.ls {
  height: 17px;
  margin: 4px 5px 0 0;
  padding-right: 4px;
  gap: 5px;
  border: 1px solid #222;
  border-radius: 3px;
  background: #505050;
}
.ls i {
  width: 31px;
  height: 15px;
  background: #f00;
}
.nav {
  display: flex;
  width: 52px;
  height: 25px;
  margin: 2px 4px 0 0;
  background: #4d4d4d;
  border: 1px solid #222;
  border-radius: 3px;
}
.nav button {
  flex: 1;
}
.nav button + button {
  border-left: 1px solid #222;
}
.nav i {
  border: 5px solid transparent;
}
.nav .left {
  border-left: 0;
  border-right-color: #888;
}
.nav .right {
  border-right: 0;
  border-left-color: #fff;
}
.layer-tabs {
  display: flex;
  flex: 1;
  min-width: 0;
  overflow: hidden;
  border-top: 1px solid #222;
}
.layer-tabs button {
  flex: none;
  gap: 10px;
  padding: 0 8px;
  border: 1px solid #222;
  border-width: 0 1px 1px 0;
  border-radius: 0 0 3px 3px;
}
.layer-tabs .on {
  background: #4d4d4d;
  color: #fff;
  font-size: 14px;
  font-weight: 700;
}
.layer-tabs i {
  width: 13px;
  height: 13px;
  border: 1px solid #aaa;
}
.c-red { background: #f00; }
.c-blue { background: #00f; }
.c-magenta { background: #f0f; }
.c-purple { background: #800080; }
.c-green { background: #008000; }
.c-yellow { background: #ff0; }
.c-olive { background: #808000; }
.c-gray { background: #808080; }
.c-maroon { background: #800000; }

.side-tabs {
  display: flex;
  flex-direction: column;
  gap: 3px;
  width: 32px;
  margin: 3px 3px 3px 3px;
  padding: 1px 3px 0 4px;
  background: #424242;
}
.side-tabs button {
  writing-mode: vertical-rl;
  width: 25px;
  padding: 4px 0;
  background: #505050;
  border: 1px solid #222;
  border-radius: 3px;
}

/* status bar */
.status {
  display: flex;
  align-items: center;
  height: 30px;
  padding-left: 6px;
  background:
    linear-gradient(#303030, #303030) 486px 5px / 2px 22px no-repeat,
    linear-gradient(#303030, #303030) 973px 5px / 2px 22px no-repeat,
    #404040;
}
.status span {
  margin-right: 20px;
}
.status span + span {
  margin-right: 29px;
}
.ime {
  display: flex;
  align-items: center;
  gap: 5px;
  height: 28px;
  margin-left: auto;
  padding: 0 6px 0 39px;
  background: #fff;
  position: relative;
}
.ime svg {
  width: 22px;
  height: 22px;
}
.ime .s {
  position: absolute;
  left: -1px;
  top: -4px;
  width: 35px;
  height: 34px;
}
.ime b {
  width: 22px;
  color: #1f74c9;
  font-size: 19px;
}

/* windows taskbar */
.taskbar {
  display: flex;
  height: 50px;
  color: #222;
  background: linear-gradient(90deg, #dbe0e2, #e2e0e4 26%, #d2d4e0 30%, #cccdd9 50%, #dfe4e7 55%, #dfe8e5 62%, #d4dcda 68%, #d9d4dc 73%, #cfd0dc 78%, #d3d2dc);
}
.start {
  width: 61px;
}
.start svg {
  width: 20px;
  height: 20px;
}
.task-search {
  display: flex;
  align-items: center;
  gap: 14px;
  width: 428px;
  padding: 0 13px;
  background: #fff;
  border: 1px solid #ccc;
  font-size: 19px;
}
.task-search svg {
  width: 20px;
  height: 20px;
}
.apps {
  display: flex;
}
.apps button {
  position: relative;
  width: 62px;
}
.apps svg {
  width: 30px;
  height: 30px;
}
.apps .run::after {
  content: "";
  position: absolute;
  left: 6px;
  right: 6px;
  bottom: 0;
  height: 3px;
  background: #2ba5d3;
}
.apps .front {
  background: #f1f0f4;
}
.apps .front::after {
  left: 0;
  right: 0;
}
.youdao {
  width: 30px;
  line-height: 30px;
  background: #fc0d1b;
  border-radius: 5px;
  color: #fff;
  font-size: 12px;
  font-weight: 700;
}
.tray {
  display: flex;
  align-items: center;
  gap: 8px;
  margin-left: auto;
  padding-right: 31px;
  border-right: 1px solid #aaa;
}
.tray svg {
  width: 22px;
  height: 22px;
}
.tray .weather {
  width: 26px;
}
.tray .temp {
  margin: 0 12px 0 5px;
  font-size: 19px;
}
.tray .s {
  margin: 0 12px 0 5px;
}
.tray time {
  font-size: 16px;
  line-height: 23px;
  text-align: center;
}
.tray .msg {
  margin-left: 12px;
}

.watermark {
  margin-top: auto;
  padding: 0 10px 6px;
  text-align: right;
  color: #e2e2e2;
  font: 16px/22px "Liberation Sans", sans-serif;
}
```
